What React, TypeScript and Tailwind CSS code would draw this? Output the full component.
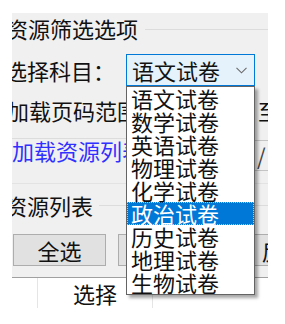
import React from "react";

const items = ["语文试卷", "数学试卷", "英语试卷", "物理试卷", "化学试卷", "政治试卷", "历史试卷", "地理试卷", "生物试卷"];

export default function App() {
  return (
    <div
      className="relative w-[285px] h-[324px] overflow-hidden bg-white text-[22px] leading-[23px] text-[#111]"
      style={{ fontFamily: '"Noto Sans CJK SC", "Noto Sans", sans-serif' }}
    >
      <div className="ml-[12px] mt-[13px] w-[256px] h-[265px] bg-[#f0f0f0] overflow-hidden border-b border-[#a0a0a0] flex flex-col">
        {/* group title */}
        <div className="h-[30px] flex items-center flex-none">
          <span className="ml-[-6px] whitespace-nowrap flex-none">资源筛选选项</span>
          <div className="flex-1 h-px bg-[#dcdcdc] ml-[7px] mt-[2px]" />
        </div>
        {/* subject row */}
        <div className="mt-[11px] h-[32px] flex items-center flex-none">
          <span className="ml-[-7px] w-[121px] flex-none whitespace-nowrap">选择科目：</span>
          <div className="w-[129px] h-[32px] flex-none border border-[#0078d7] bg-[#e5f1fb] flex items-center pl-[5px]">
            <span className="whitespace-nowrap">语文试卷</span>
            <svg className="ml-auto mr-[7px]" width="11" height="7" viewBox="0 0 11 7">
              <path d="M0.5 0.8 L5.5 5.8 L10.5 0.8" fill="none" stroke="#6a6a6a" strokeWidth="1.1" />
            </svg>
          </div>
        </div>
        {/* page range row */}
        <div className="mt-[13px] h-[23px] flex items-center flex-none">
          <span className="ml-[-5px] w-[132px] flex-none whitespace-nowrap">加载页码范围</span>
          <div className="w-[119px] flex-none" />
          <span className="flex-none whitespace-nowrap">至</span>
        </div>
        {/* load row */}
        <div className="mt-[16px] h-[33px] flex flex-none">
          <div className="w-[132px] flex-none border-t border-[#dcdcdc] text-[#3030ff] whitespace-nowrap">加载资源列表</div>
          <div className="w-[150px] flex-none mt-[2px] h-[31px] border-y border-[#c4c4c4] pl-[113px] flex items-center">
            <span className="text-[#444]">/</span>
          </div>
        </div>
        <div className="mt-[12px] h-px bg-[#e3e3e3] flex-none" />
        {/* list group title */}
        <div className="mt-[10px] h-[23px] flex items-center flex-none">
          <span className="ml-[-7px] whitespace-nowrap flex-none">资源列表</span>
          <div className="flex-1 h-px bg-[#dcdcdc] ml-[6px]" />
        </div>
        {/* buttons */}
        <div className="mt-[17px] h-[32px] flex flex-none">
          <div className="ml-[1px] w-[93px] flex-none border border-[#adadad] bg-[#e1e1e1] flex items-center justify-center whitespace-nowrap">全选</div>
          <div className="ml-[12px] w-[107px] flex-none border border-[#adadad] bg-[#e1e1e1] flex items-center justify-center whitespace-nowrap">全不选</div>
          <div className="ml-[12px] w-[93px] flex-none border border-[#adadad] bg-[#e1e1e1] flex items-center justify-center whitespace-nowrap">反选</div>
        </div>
      </div>
      {/* list header */}
      <div className="ml-[12px] w-[256px] h-[30px] flex">
        <div className="w-[26px] h-full border-r border-[#e5e5e5] flex-none" />
        <div className="w-[115px] h-full border-r border-[#e5e5e5] flex-none flex items-center justify-center">选择</div>
        <div className="flex-1" />
      </div>

      {/* dropdown list overlay */}
      <div className="absolute left-[126px] top-[86px] w-[129px] h-[209px] bg-white border border-[#646464] shadow-[3px_3px_3px_rgba(0,0,0,0.35)]">
        {items.map((it, i) =>
          i === 5 ? (
            <div key={it} className="h-[23px] leading-[21px] pl-[3px] bg-[#0078d7] text-white border border-dotted border-[#a9cdf0] whitespace-nowrap">
              {it}
            </div>
          ) : (
            <div key={it} className="h-[23px] leading-[23px] pl-[4px] whitespace-nowrap">
              {it}
            </div>
          )
        )}
      </div>
    </div>
  );
}
